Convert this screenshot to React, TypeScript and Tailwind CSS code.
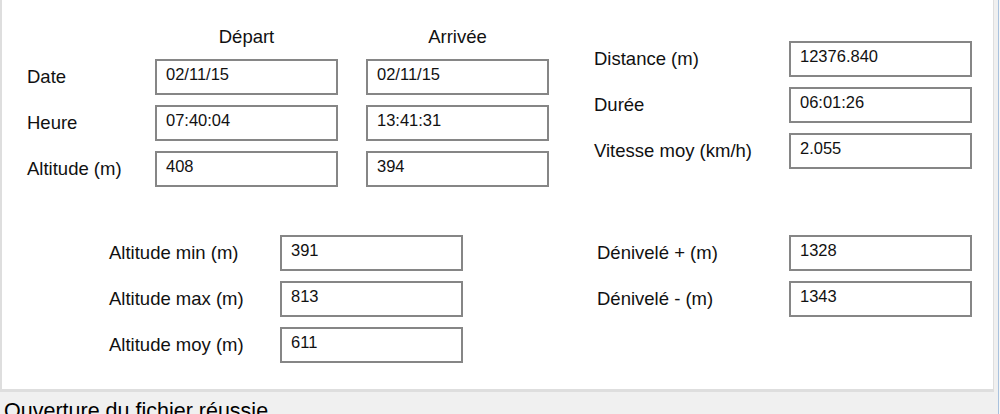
const font = { fontFamily: '"Liberation Sans", Arial, sans-serif' };

function Field({ value }: { value: string }) {
  return (
    <div className="flex h-[36px] w-[183px] items-center border-2 border-[#868686] bg-white pb-[5px] pl-[9px] text-[16.5px] text-[#111]">
      {value}
    </div>
  );
}

function Label({ children }: { children: React.ReactNode }) {
  return <div className="flex h-[36px] items-center whitespace-nowrap text-[#111]">{children}</div>;
}

export default function App() {
  return (
    <div className="flex h-[414px] w-[1000px] overflow-hidden bg-[#f0f0f0] text-[18.5px]" style={font}>
      <div className="flex w-[998px] flex-col">
        {/* panneau principal */}
        <div className="h-[392px] w-[994px] shrink-0 border-b-[3px] border-l-2 border-r border-[#dedede] bg-white">
          <div className="flex items-start">
            <div className="ml-[25px] mt-[25px] grid grid-cols-[128px_211px_183px] grid-rows-[24px_36px_36px_36px] gap-y-[10px]">
              <div />
              <div className="flex w-[183px] items-center justify-center text-[#111]">Départ</div>
              <div className="flex items-center justify-center text-[#111]">Arrivée</div>
              <Label>Date</Label>
              <Field value="02/11/15" />
              <Field value="02/11/15" />
              <Label>Heure</Label>
              <Field value="07:40:04" />
              <Field value="13:41:31" />
              <Label>Altitude (m)</Label>
              <Field value="408" />
              <Field value="394" />
            </div>
            <div className="ml-[45px] mt-[41px] grid grid-cols-[195px_183px] gap-y-[10px]">
              <Label>Distance (m)</Label>
              <Field value="12376.840" />
              <Label>Durée</Label>
              <Field value="06:01:26" />
              <Label>Vitesse moy (km/h)</Label>
              <Field value="2.055" />
            </div>
          </div>
          <div className="mt-[48px] flex items-start">
            <div className="ml-[107px] grid grid-cols-[171px_183px] gap-y-[10px]">
              <Label>Altitude min (m)</Label>
              <Field value="391" />
              <Label>Altitude max (m)</Label>
              <Field value="813" />
              <Label>Altitude moy (m)</Label>
              <Field value="611" />
            </div>
            <div className="ml-[134px] grid grid-cols-[192px_183px] gap-y-[10px]">
              <Label>Dénivelé + (m)</Label>
              <Field value="1328" />
              <Label>Dénivelé - (m)</Label>
              <Field value="1343" />
            </div>
          </div>
        </div>
        {/* barre d'état */}
        <div className="shrink-0 whitespace-nowrap pl-[4px] pt-[9px] text-[21.5px] leading-none text-black">
          Ouverture du fichier réussie
        </div>
      </div>
      <div className="w-px bg-[#a9c2de]" />
      <div className="w-px bg-[#f7f7f7]" />
    </div>
  );
}
